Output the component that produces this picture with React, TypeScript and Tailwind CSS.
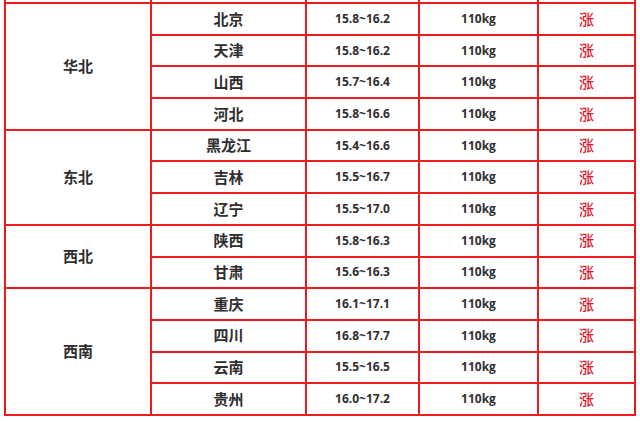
import React from "react";

type Region = { name: string; cities: { city: string; price: string }[] };

const regions: Region[] = [
  {
    name: "华北",
    cities: [
      { city: "北京", price: "15.8~16.2" },
      { city: "天津", price: "15.8~16.2" },
      { city: "山西", price: "15.7~16.4" },
      { city: "河北", price: "15.8~16.6" },
    ],
  },
  {
    name: "东北",
    cities: [
      { city: "黑龙江", price: "15.4~16.6" },
      { city: "吉林", price: "15.5~16.7" },
      { city: "辽宁", price: "15.5~17.0" },
    ],
  },
  {
    name: "西北",
    cities: [
      { city: "陕西", price: "15.8~16.3" },
      { city: "甘肃", price: "15.6~16.3" },
    ],
  },
  {
    name: "西南",
    cities: [
      { city: "重庆", price: "16.1~17.1" },
      { city: "四川", price: "16.8~17.7" },
      { city: "云南", price: "15.5~16.5" },
      { city: "贵州", price: "16.0~17.2" },
    ],
  },
];

const spanClass: Record<number, string> = {
  2: "row-span-2",
  3: "row-span-3",
  4: "row-span-4",
};

const cell = "flex items-center justify-center border-r-2 border-b-2 border-[#ec1c1c]";
const cjk = "font-['Noto_Sans_CJK_SC',sans-serif]";
const latin = "font-['Open_Sans','Noto_Sans_CJK_SC',sans-serif]";

export default function App() {
  return (
    <div className="w-[640px] h-[422px] bg-white overflow-hidden">
      <div className="ml-[4px] w-[632px] border-l-2 border-[#ec1c1c]">
        {/* tail of the row above */}
        <div className="grid grid-cols-[146px_155px_113px_119px_97px] h-[4px]">
          {[0, 1, 2, 3, 4].map((i) => (
            <div key={i} className="border-r-2 border-b-2 border-[#ec1c1c]" />
          ))}
        </div>

        <div className="grid grid-cols-[146px_155px_113px_119px_97px] grid-rows-[repeat(13,31.7px)] text-[#2e2e2e]">
          {regions.map((region) => (
            <React.Fragment key={region.name}>
              <div
                className={`${cell} ${spanClass[region.cities.length]} col-start-1 ${cjk} text-[15px] font-bold`}
              >
                {region.name}
              </div>
              {region.cities.map((c) => (
                <React.Fragment key={c.city}>
                  <div className={`${cell} col-start-2 ${cjk} text-[15px] font-bold`}>{c.city}</div>
                  <div className={`${cell} ${latin} text-[12px] font-bold`}>{c.price}</div>
                  <div className={`${cell} ${latin} text-[12px] font-bold`}>110kg</div>
                  <div className={`${cell} ${cjk} text-[15px] font-medium text-[#e3142b]`}>涨</div>
                </React.Fragment>
              ))}
            </React.Fragment>
          ))}
        </div>
      </div>
    </div>
  );
}
